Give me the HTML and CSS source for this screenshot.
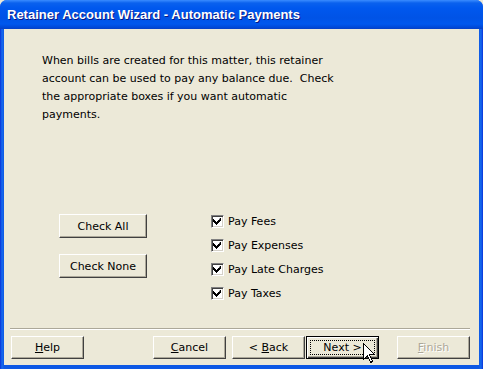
FILE: index.html
```html
<!DOCTYPE html>
<html>
<head>
    <title>Retainer Account Wizard - Automatic Payments</title>
    <link rel="stylesheet" href="styles.css">
</head>
<body>
    <div class="window">
        <div class="titlebar">Retainer Account Wizard - Automatic Payments</div>

        <div class="client">
            <p class="intro">
                When bills are created for this matter, this retainer<br>
                account can be used to pay any balance due.&nbsp; Check<br>
                the appropriate boxes if you want automatic<br>
                payments.
            </p>

            <div class="options">
                <div class="option-buttons">
                    <button type="button" class="btn btn-wide">Check All</button>
                    <button type="button" class="btn btn-wide">Check None</button>
                </div>

                <!-- 付款选项 -->
                <ul class="check-list">
                    <li class="check-item"><span class="check-box checked"></span>Pay Fees</li>
                    <li class="check-item"><span class="check-box checked"></span>Pay Expenses</li>
                    <li class="check-item"><span class="check-box checked"></span>Pay Late Charges</li>
                    <li class="check-item"><span class="check-box checked"></span>Pay Taxes</li>
                </ul>
            </div>

            <div class="separator"></div>

            <div class="footer">
                <button type="button" class="btn btn-help"><u>H</u>elp</button>
                <button type="button" class="btn btn-cancel"><u>C</u>ancel</button>
                <button type="button" class="btn btn-back">&lt; <u>B</u>ack</button>
                <button type="button" class="btn btn-next"><span class="focus-ring">Next &gt;</span></button>
                <button type="button" class="btn btn-finish" disabled><u>F</u>inish</button>

                <svg class="pointer" width="13" height="21" viewBox="0 0 13 21">
                    <path d="M0.5 0.5 L0.5 16.5 L4.5 12.5 L7.5 19.5 L9.5 18.5 L6.5 11.5 L11.5 11.5 Z"
                          fill="#fff" stroke="#000" stroke-width="1" shape-rendering="crispEdges"/>
                </svg>
            </div>
        </div>
    </div>
</body>
</html>
```

FILE: styles.css
```css
body {
    margin: 0;
    background-color: #ece9d8;
}
.window {
    width: 483px;
    height: 369px;
    background: linear-gradient(to right, #0831d9 0, #166aee 2px, #0d58e4 4px, #0d58e4 479px, #166aee 481px, #0831d9 483px);
    border-radius: 7px 7px 0 0;
    display: flex;
    flex-direction: column;
    box-sizing: border-box;
    padding-bottom: 4px;
    position: relative;
}
.titlebar {
    height: 29px;
    box-sizing: border-box;
    padding: 7px 0 0 7px;
    border-radius: 7px 7px 0 0;
    background: linear-gradient(to bottom, #3a8cff 0, #0a61ee 3px, #0058ee 8px, #0053e6 18px, #0058ee 24px, #0046d4 28px, #0b3fbf 29px);
    color: #fff;
    font-family: "Liberation Sans", Arial, sans-serif;
    font-weight: bold;
    font-size: 13px;
    text-shadow: 1px 1px #0a1883;
}
.client {
    flex: 1;
    margin: 0 4px;
    background-color: #ece9d8;
    font-family: "DejaVu Sans", Tahoma, sans-serif;
    font-size: 11px;
    color: #000;
    display: flex;
    flex-direction: column;
}
.intro {
    margin: 23px 0 0 38px;
    line-height: 18px;
}
.options {
    display: flex;
    margin-top: 85px;
}
.option-buttons {
    display: flex;
    flex-direction: column;
    gap: 16px;
    margin: 5px 0 0 55px;
}
.check-list {
    list-style: none;
    margin: 0 0 0 64px;
    padding: 0;
}
.check-item {
    height: 24px;
    display: flex;
    align-items: center;
}
.check-box {
    width: 13px;
    height: 13px;
    box-sizing: border-box;
    margin-right: 4px;
    background-color: #fff;
    border-style: solid;
    border-width: 1px;
    border-color: #808080 #fff #fff #808080;
    box-shadow: inset 1px 1px #404040, inset -1px -1px #d4d0c8;
}
.check-box.checked {
    background: #fff url("data:image/svg+xml,%3Csvg xmlns='http://www.w3.org/2000/svg' width='11' height='11'%3E%3Cpath d='M8 2h1v3h-1v1h-1v1h-1v1h-1v1h-1v-1h-1v-1h-1v-1h-1v-3h1v1h1v1h1v1h1v-1h1v-1h1z' fill='%23000'/%3E%3C/svg%3E") no-repeat center;
}
.btn {
    height: 23px;
    box-sizing: border-box;
    padding: 0;
    background-color: #ece9d8;
    font-family: "DejaVu Sans", Tahoma, sans-serif;
    font-size: 11px;
    color: #000;
    border-style: solid;
    border-width: 1px;
    border-color: #fff #404040 #404040 #fff;
    box-shadow: inset -1px -1px #aca899;
}
.btn-wide {
    width: 88px;
    height: 24px;
}
.separator {
    margin: 23px 9px 0 6px;
    height: 0;
    border-top: 1px solid #aca899;
    border-bottom: 1px solid #fff;
}
.footer {
    display: flex;
    margin: 6px 0 0 7px;
    position: relative;
}
.footer .btn {
    width: 73px;
}
.btn-cancel {
    margin-left: 69px;
}
.btn-back {
    margin-left: 6px;
}
.btn-next {
    margin-left: 1px;
    border: 1px solid #000;
    box-shadow: inset 1px 1px #fff, inset -1px -1px #404040, inset -2px -2px #aca899;
    padding: 3px;
}
.focus-ring {
    display: flex;
    align-items: center;
    justify-content: center;
    height: 100%;
    border: 1px dotted #000;
    box-sizing: border-box;
}
.btn-finish {
    margin-left: 18px;
    color: #aca899;
    text-shadow: 1px 1px #fff;
}
.pointer {
    position: absolute;
    left: 352px;
    top: 7px;
}
```
